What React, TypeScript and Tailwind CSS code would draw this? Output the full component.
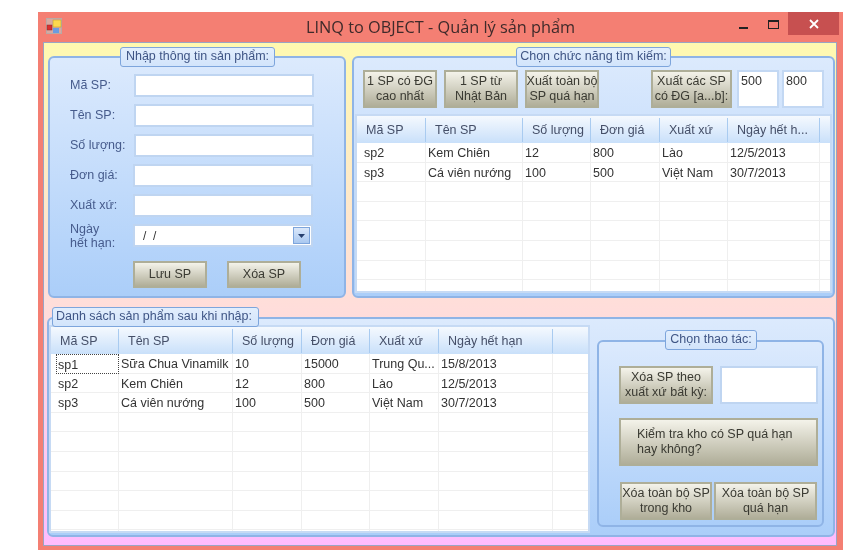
import React from "react";

const F = "font-['Liberation_Sans',Arial,sans-serif]";

function Legend({ text, cls }: { text: string; cls: string }) {
  return (
    <div className={`absolute h-[20px] whitespace-nowrap rounded-[3px] border border-[#7da5dc] bg-gradient-to-b from-[#e2eefd] to-[#d2e4fb] text-center text-[12.5px] leading-[17px] text-[#3f5585] ${cls}`}>
      {text}
    </div>
  );
}

function Btn({ children, cls }: { children: React.ReactNode; cls: string }) {
  return (
    <div className={`flex flex-col items-center justify-center whitespace-nowrap border-2 border-[#aeae98] bg-gradient-to-b from-[#f4f3ea] to-[#b0ae99] text-[12.5px] leading-[15px] text-[#3a3a32] ${cls}`}>
      {children}
    </div>
  );
}

function Input({ cls }: { cls: string }) {
  return <div className={`border-2 border-[#bfd5f1] bg-white ${cls}`} />;
}

function Row({ label, cls }: { label: string; cls: string }) {
  return (
    <div className="flex h-[23px] items-center">
      <div className="w-[64px] text-[12.5px] text-[#465b8c]">{label}</div>
      <Input cls={`h-[23px] w-[180px] ${cls}`} />
    </div>
  );
}

function DataGrid({
  cols,
  headers,
  rows,
  count,
  cls,
  focusFirst,
}: {
  cols: string;
  headers: string[];
  rows: string[][];
  count: number;
  cls: string;
  focusFirst?: boolean;
}) {
  const all = Array.from({ length: count }, (_, i) => rows[i] ?? ["", "", "", "", "", "", ""]);
  return (
    <div className={`flex flex-col overflow-hidden border-2 border-[#c6daf4] bg-white ${cls}`}>
      <div className={`grid h-[27px] shrink-0 items-center bg-gradient-to-b from-[#f5f9fe] to-[#c9e0fa] pt-[1px] ${cols}`}>
        {[...headers, ""].map((h, i) => (
          <div key={i} className="flex h-[24px] items-center truncate border-r border-[#a9cbf0] pl-[9px] text-[12.5px] text-[#454f68] last:border-r-0">
            {h}
          </div>
        ))}
      </div>
      {all.map((r, ri) => (
        <div key={ri} className={`grid h-[19.6px] shrink-0 ${cols}`}>
          {[...r.slice(0, 6), ""].map((c, ci) => {
            const focus = focusFirst && ri === 0 && ci === 0;
            return (
              <div
                key={ci}
                className={`flex items-center overflow-hidden whitespace-nowrap pt-[2px] text-[12.5px] leading-none text-[#333] ${
                  focus
                    ? "ml-[5px] border border-dotted border-[#444] pl-[1px]"
                    : `border-b border-r border-[#efefef] last:border-r-0 ${ci === 0 ? "pl-[7px]" : "pl-[2px]"}`
                }`}
              >
                {c}
              </div>
            );
          })}
        </div>
      ))}
    </div>
  );
}

const H1 = ["Mã SP", "Tên SP", "Số lượng", "Đơn giá", "Xuất xứ"];

export default function App() {
  return (
    <div className={`h-[560px] w-[855px] overflow-hidden bg-white pl-[38px] pt-[12px] blur-[0.4px] ${F}`}>
      <div className="flex h-[538px] w-[805px] flex-col border-b-[4px] border-l-[5px] border-r-[6px] border-[#f47f73] bg-[#f47f73]">
        {/* title bar */}
        <div className="relative flex h-[30px] shrink-0 items-start">
          <svg width="16" height="16" viewBox="0 0 16 16" className="ml-[3px] mt-[6px]">
            <rect x="0.5" y="0.5" width="15" height="15" fill="#d9a8a0" stroke="#b9a9a6" />
            <rect x="1" y="7" width="5" height="5" fill="#d92f2f" stroke="#8a2a2a" strokeWidth="0.5" />
            <rect x="7" y="2" width="8" height="7" fill="#fcd84e" stroke="#b99a2a" strokeWidth="0.5" />
            <rect x="7" y="10" width="6" height="5" fill="#6b9be0" />
          </svg>
          <div className="flex-1 pl-[80px] pt-[2px] text-center font-['Open_Sans',sans-serif] text-[16.3px] leading-[26px] text-[#3e2a2a]">
            LINQ to OBJECT - Quản lý sản phẩm
          </div>
          <div className="flex h-[23px] items-start">
            <div className="mt-[15px] h-[2px] w-[9px] bg-[#222]" />
            <div className="ml-[20px] mt-[8px] h-[9px] w-[11px] border border-t-2 border-[#222]" />
            <div className="ml-[9px] mr-[-2px] flex h-[23px] w-[51px] items-center justify-center bg-[#c75050]">
              <svg width="10" height="10" viewBox="0 0 10 10">
                <path d="M1 1 L9 9 M9 1 L1 9" stroke="#fff" strokeWidth="1.8" />
              </svg>
            </div>
          </div>
        </div>

        {/* client */}
        <div className="flex min-h-0 flex-1 flex-col border border-[#9aa4c4] bg-gradient-to-b from-[#fff9b0] via-[#ffdcdc] via-55% to-[#ffbcfd] pl-[3px] pr-[1px] pt-[13px]">
          <div className="flex h-[242px] gap-[6px] pl-[1px]">
            {/* input panel */}
            <div className="relative h-[242px] w-[298px] rounded-[6px] border-2 border-[#8fb4e6] bg-gradient-to-b from-[#dceafd] to-[#abcef9] pl-[20px] pt-[16px]">
              <Legend text="Nhập thông tin sản phẩm:" cls="left-[70px] top-[-11px] w-[155px]" />
              <div className="flex flex-col gap-[7px]">
                <Row label="Mã SP:" cls="" />
                <Row label="Tên SP:" cls="" />
                <Row label="Số lượng:" cls="" />
                <Row label="Đơn giá:" cls="-ml-[1px]" />
                <Row label="Xuất xứ:" cls="-ml-[1px]" />
                <div className="flex h-[23px] items-center">
                  <div className="w-[63px] text-[12.5px] leading-[14px] text-[#465b8c]">
                    Ngày
                    <br />
                    hết hạn:
                  </div>
                  <div className="flex h-[23px] w-[180px] items-center justify-between border-2 border-[#bfd5f1] bg-white pl-[8px] pr-[1px] text-[12px] text-[#333]">
                    <span className="whitespace-pre">/  /</span>
                    <div className="flex h-[17px] w-[17px] items-center justify-center border border-[#7da5dc] bg-gradient-to-b from-[#dbe8fa] to-[#a9c8f0]">
                      <svg width="7" height="4" viewBox="0 0 7 4">
                        <path d="M0 0 H7 L3.5 4 Z" fill="#27406f" />
                      </svg>
                    </div>
                  </div>
                </div>
              </div>
              <div className="ml-[63px] mt-[14px] flex gap-[20px]">
                <Btn cls="h-[27px] w-[74px]">Lưu SP</Btn>
                <Btn cls="h-[27px] w-[74px]">Xóa SP</Btn>
              </div>
            </div>

            {/* search panel */}
            <div className="relative h-[242px] w-[483px] rounded-[6px] border-2 border-[#8fb4e6] bg-gradient-to-b from-[#dceafd] to-[#abcef9] pt-[12px]">
              <Legend text="Chọn chức năng tìm kiếm:" cls="left-[162px] top-[-11px] w-[155px]" />
              <div className="flex h-[39px] items-start pl-[9px]">
                <Btn cls="h-[38px] w-[74px]">
                  <span>1 SP có ĐG</span>
                  <span>cao nhất</span>
                </Btn>
                <Btn cls="ml-[7px] h-[38px] w-[74px]">
                  <span>1 SP từ</span>
                  <span>Nhật Bản</span>
                </Btn>
                <Btn cls="ml-[7px] h-[38px] w-[74px]">
                  <span>Xuất toàn bộ</span>
                  <span>SP quá hạn</span>
                </Btn>
                <Btn cls="ml-[52px] h-[38px] w-[81px]">
                  <span>Xuất các SP</span>
                  <span>có ĐG [a...b]:</span>
                </Btn>
                <div className="ml-[5px] h-[38px] w-[42px] border-2 border-[#c3d8f3] bg-white pl-[2px] text-[12.5px] leading-[19px] text-[#333]">500</div>
                <div className="ml-[3px] h-[38px] w-[42px] border-2 border-[#c3d8f3] bg-white pl-[2px] text-[12.5px] leading-[19px] text-[#333]">800</div>
              </div>
              <DataGrid
                cls="ml-[1px] mt-[5px] h-[179px] w-[477px]"
                cols="grid-cols-[69px_97px_68px_69px_68px_92px_1fr]"
                headers={[...H1, "Ngày hết h..."]}
                rows={[
                  ["sp2", "Kem Chiên", "12", "800", "Lào", "12/5/2013"],
                  ["sp3", "Cá viên nướng", "100", "500", "Việt Nam", "30/7/2013"],
                ]}
                count={8}
              />
            </div>
          </div>

          {/* bottom panel */}
          <div className="relative mt-[19px] flex h-[220px] w-[788px] items-start rounded-[6px] border-2 border-[#8fb4e6] bg-gradient-to-b from-[#dceafd] to-[#abcef9] pt-[6px]">
            <Legend text="Danh sách sản phẩm sau khi nhập:" cls="left-[3px] top-[-12px] w-[207px] !text-left pl-[3px]" />
            <DataGrid
              cls="h-[208px] w-[541px] shrink-0"
              cols="grid-cols-[68px_114px_69px_68px_69px_114px_1fr]"
              headers={[...H1, "Ngày hết hạn"]}
              rows={[
                ["sp1", "Sữa Chua Vinamilk", "10", "15000", "Trung Qu...", "15/8/2013"],
                ["sp2", "Kem Chiên", "12", "800", "Lào", "12/5/2013"],
                ["sp3", "Cá viên nướng", "100", "500", "Việt Nam", "30/7/2013"],
              ]}
              count={10}
              focusFirst
            />
            {/* actions */}
            <div className="relative ml-[7px] mt-[15px] h-[187px] w-[227px] rounded-[6px] border-2 border-[#8fb4e6] bg-gradient-to-b from-[#dceafd] to-[#abcef9] pl-[20px] pt-[24px]">
              <Legend text="Chọn thao tác:" cls="left-[66px] top-[-12px] w-[92px]" />
              <div className="flex items-start gap-[7px]">
                <Btn cls="h-[38px] w-[94px]">
                  <span>Xóa SP theo</span>
                  <span>xuất xứ bất kỳ:</span>
                </Btn>
                <Input cls="h-[38px] w-[98px]" />
              </div>
              <Btn cls="mt-[14px] h-[48px] w-[199px] !items-start pl-[16px]">
                <span>Kiểm tra kho có SP quá hạn</span>
                <span>hay không?</span>
              </Btn>
              <div className="ml-[1px] mt-[16px] flex gap-[2px]">
                <Btn cls="h-[38px] w-[92px]">
                  <span>Xóa toàn bộ SP</span>
                  <span>trong kho</span>
                </Btn>
                <Btn cls="h-[38px] w-[103px]">
                  <span>Xóa toàn bộ SP</span>
                  <span>quá hạn</span>
                </Btn>
              </div>
            </div>
          </div>
        </div>
      </div>
    </div>
  );
}
